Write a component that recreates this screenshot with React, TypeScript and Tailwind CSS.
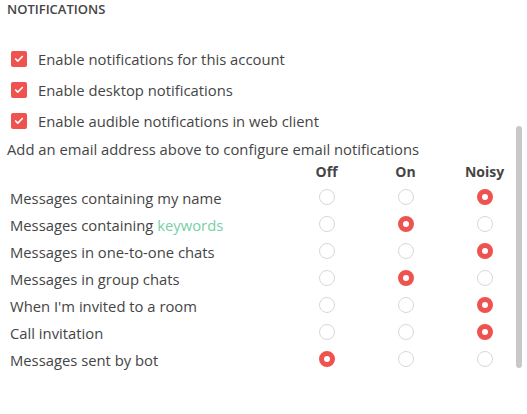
import React from 'react';

type Level = 'off' | 'on' | 'noisy';

interface Rule {
  label: React.ReactNode;
  level: Level;
}

const RED = 'border-[#ee5350]';

const rules: Rule[] = [
  { label: 'Messages containing my name', level: 'noisy' },
  {
    label: (
      <span>
        Messages containing <span className="text-[#76cfa6]">keywords</span>
      </span>
    ),
    level: 'on',
  },
  { label: 'Messages in one-to-one chats', level: 'noisy' },
  { label: 'Messages in group chats', level: 'on' },
  { label: "When I'm invited to a room", level: 'noisy' },
  { label: 'Call invitation', level: 'noisy' },
  { label: 'Messages sent by bot', level: 'off' },
];

const Checkbox: React.FC = () => (
  <div className="w-4 h-4 rounded-[2px] bg-[#ee5350] flex items-center justify-center shrink-0">
    <svg width="10" height="10" viewBox="0 0 24 24" fill="none" stroke="white" strokeWidth="4" strokeLinecap="round" strokeLinejoin="round">
      <path d="M20 6 9 17l-5-5" />
    </svg>
  </div>
);

const Radio: React.FC<{ checked: boolean }> = ({ checked }) =>
  checked ? (
    <div className={`w-4 h-4 rounded-full border-[5px] ${RED} bg-white`}></div>
  ) : (
    <div className="w-4 h-4 rounded-full border border-[#d8d8d8] bg-white"></div>
  );

export default function App() {
  const levels: Level[] = ['off', 'on', 'noisy'];

  return (
    <div className="relative w-[527px] h-[414px] overflow-hidden bg-white font-['Open_Sans',sans-serif] text-[#454545]">
      {/* Section heading */}
      <h3 className="ml-[7px] text-[13px] leading-[18px] font-semibold">NOTIFICATIONS</h3>

      {/* Master toggles */}
      <div className="mt-[25px] flex flex-col">
        {[
          'Enable notifications for this account',
          'Enable desktop notifications',
          'Enable audible notifications in web client',
        ].map((text) => (
          <label key={text} className="h-[31px] flex items-center pl-[11px] gap-[11px] text-[14.8px] leading-[20px]">
            <Checkbox />
            <span>{text}</span>
          </label>
        ))}
      </div>

      <div className="mt-[3px] ml-[7px] text-[14.8px] leading-[20px]">
        Add an email address above to configure email notifications
      </div>

      {/* Rules table */}
      <div className="ml-[7px] grid grid-cols-[280px_79px_79px_79px]">
        <div className="h-[25px]"></div>
        <div className="h-[25px] pt-[3px] text-center text-[14px] leading-[20px] font-bold">Off</div>
        <div className="h-[25px] pt-[3px] text-center text-[14px] leading-[20px] font-bold">On</div>
        <div className="h-[25px] pt-[3px] text-center text-[14px] leading-[20px] font-bold">Noisy</div>

        {rules.map((rule, i) => (
          <React.Fragment key={i}>
            <div className="h-[27px] flex items-center pl-[3px] text-[14.8px] leading-[20px]">{rule.label}</div>
            {levels.map((lvl) => (
              <div key={lvl} className="h-[27px] flex items-center justify-center pb-[2px]">
                <Radio checked={rule.level === lvl} />
              </div>
            ))}
          </React.Fragment>
        ))}
      </div>

      {/* Scrollbar thumb */}
      <div className="absolute left-[516px] top-[126px] w-[6px] h-[242px] rounded-[3px] bg-[#c8c8c8]"></div>
    </div>
  );
}
